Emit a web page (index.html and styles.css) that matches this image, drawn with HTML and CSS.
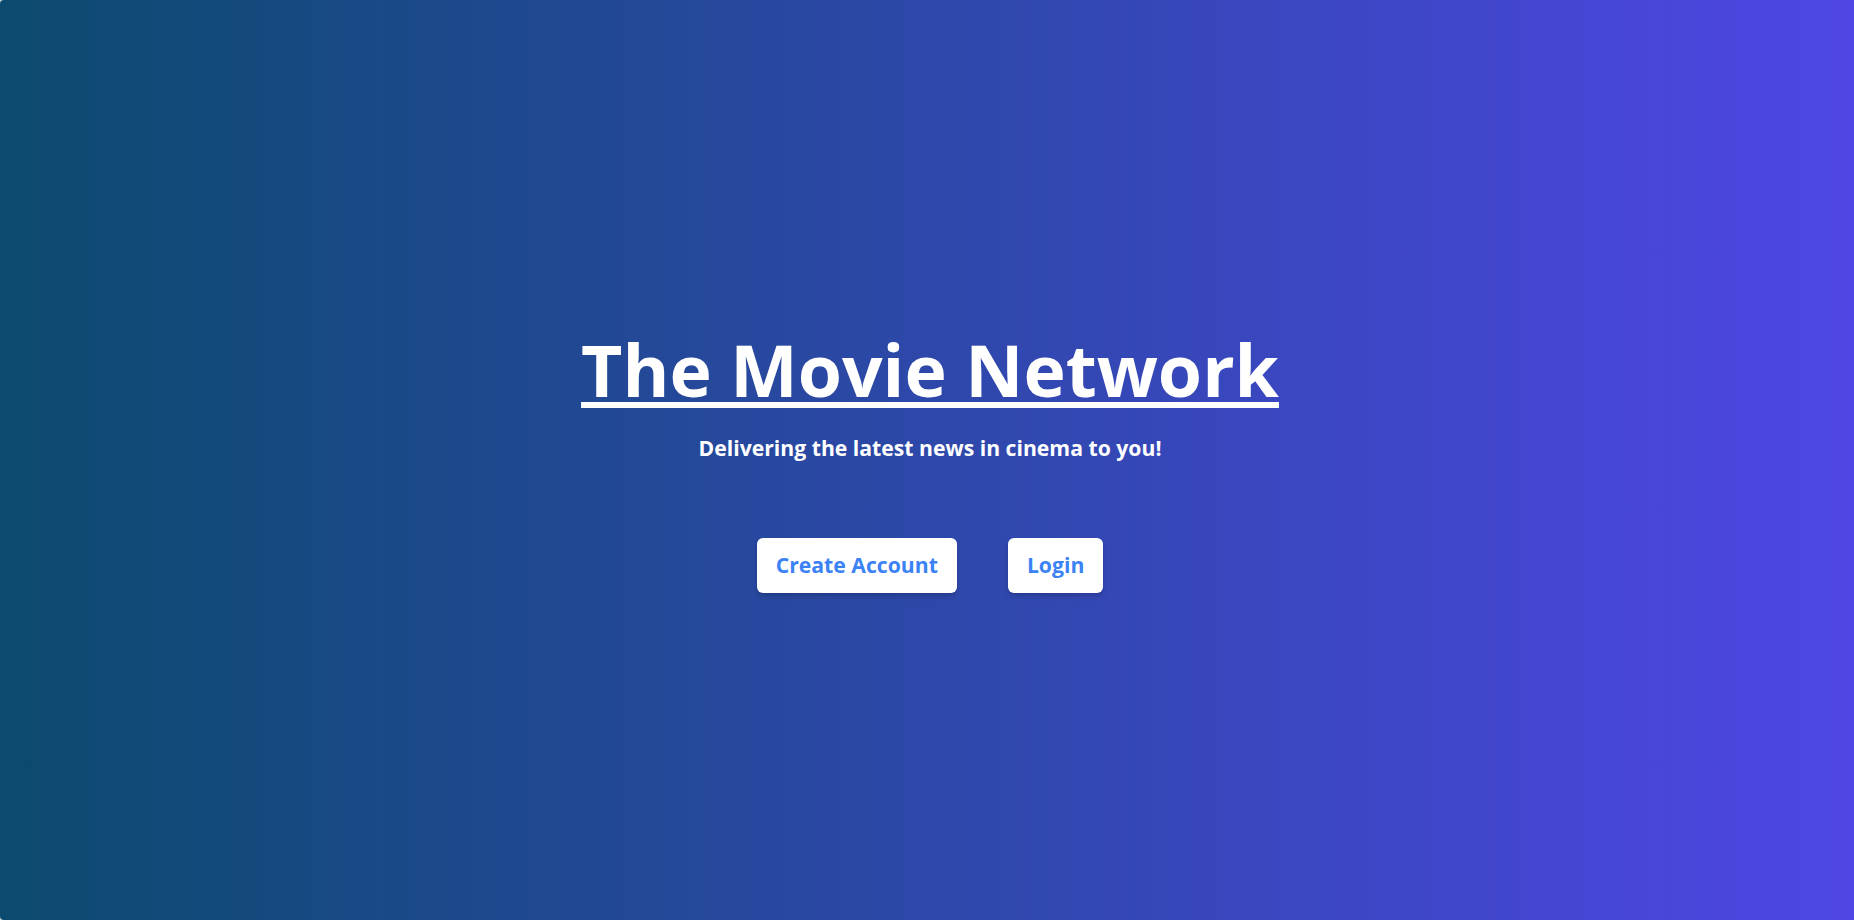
FILE: index.html
```html
<!DOCTYPE html>
<html lang="en">
<head>
<meta charset="utf-8">
<title>The Movie Network</title>
<link rel="stylesheet" href="styles.css">
</head>
<body>
<main class="hero">
  <h1 class="hero-title">The Movie Network</h1>
  <p class="hero-subtitle">Delivering the latest news in cinema to you!</p>
  <div class="hero-actions">
    <a class="btn" href="#">Create Account</a>
    <a class="btn" href="#">Login</a>
  </div>
</main>
</body>
</html>
```
FILE: styles.css
```css
html, body {
  margin: 0;
  padding: 0;
  height: 100%;
}
body {
  background: #d1d5db;
  font-family: "Open Sans", "Noto Sans", "Liberation Sans", sans-serif;
}
.hero {
  box-sizing: border-box;
  height: 920px;
  display: flex;
  flex-direction: column;
  align-items: center;
  justify-content: center;
  padding: 7px 0 0 6px;
  background: linear-gradient(to right, #0c4a6e, #4f46e5);
  border-radius: 4px 0 0 4px;
  color: #fff;
}
.hero-title {
  margin: 0;
  font-size: 71.5px;
  line-height: 72px;
  font-weight: 700;
  text-decoration: underline;
  text-decoration-thickness: 6px;
  text-underline-offset: 5px;
}
.hero-subtitle {
  margin: 28px 0 0;
  font-size: 21.2px;
  line-height: 28px;
  font-weight: 700;
}
.hero-actions {
  display: flex;
  gap: 51px;
  margin-top: 76px;
}
.btn {
  display: block;
  background: #fff;
  color: #3b82f6;
  font-size: 21.2px;
  line-height: 28px;
  font-weight: 700;
  padding: 13px 19px 14px;
  border-radius: 6px;
  text-decoration: none;
  box-shadow: 0 4px 6px -1px rgba(0,0,0,0.15), 0 2px 4px -2px rgba(0,0,0,0.15);
}
```
